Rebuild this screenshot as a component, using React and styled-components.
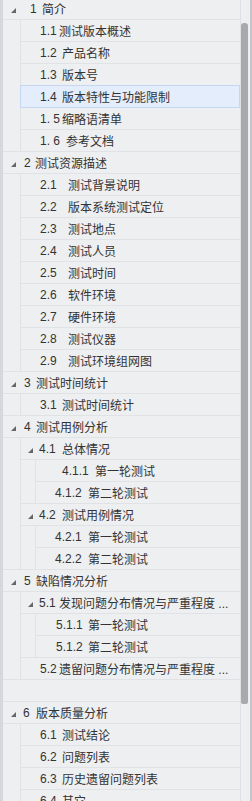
import React from 'react';
import styled, { createGlobalStyle, css } from 'styled-components';

const GlobalStyle = createGlobalStyle`
  html, body {
    margin: 0;
    padding: 0;
    background: #eeeff1;
    overflow: hidden;
  }
  body {
    font-family: "Liberation Sans", "Noto Sans CJK SC", sans-serif;
  }
`;

const Panel = styled.div`
  display: flex;
  width: 252px;
  height: 801px;
  background: #eeeff1;
  overflow: hidden;
`;

const LeftStrip = styled.div`
  flex: none;
  width: 3px;
  background: #d6d7dd;
`;

const TreeArea = styled.div`
  flex: 1;
  min-width: 0;
  overflow: hidden;
  border-right: 1px solid #dfe0e3;
`;

const TreeList = styled.div`
  margin-top: -2px;
`;

const Node = styled.div``;

const Header = styled.div`
  display: flex;
  align-items: center;
  height: 21px;
  padding-left: ${p => p.$tx}px;
  border-bottom: 1px solid #e1e2e5;
  font-size: 12px;
  color: #333;
  white-space: nowrap;
  overflow: hidden;

  ${p => p.$selected && css`
    margin: -1px 0 0 -1px;
    border: 1px solid #c7d7f2;
    background: #e4edfb;
  `}
`;

const Toggle = styled.span`
  flex: none;
  width: ${p => p.$w}px;
  display: flex;
  align-items: center;
  padding-top: 3px;
`;

const Num = styled.span`
  flex: none;
  width: ${p => p.$w}px;
`;

const Title = styled.span`
  flex: none;
`;

const Children = styled.div`
  border-bottom: 1px solid #e1e2e5;
`;

const ChildList = styled.div`
  margin-left: ${p => p.$indent}px;
  border-left: 1px solid #e1e2e5;

  & > ${Node}:last-child > *:last-child {
    border-bottom: none;
  }
`;

const ScrollTrack = styled.div`
  flex: none;
  width: 8px;
  padding: 23px 1px 0 0;
`;

const Thumb = styled.div`
  width: 7px;
  height: 681px;
  background: #a9a9ad;
  border-radius: 3px 3px 2px 2px;
`;

const RightEdge = styled.div`
  flex: none;
  width: 2px;
  background: #c3c4cc;
`;

const Arrow = () => (
  <svg width="5" height="5" viewBox="0 0 5 5">
    <polygon points="5,0 5,5 0,5" fill="#666" />
  </svg>
);

// tx: toggle offset, nx: number offset, gap: number-to-title distance
const LEVEL = [
  { tx: 8, nx: 21, indent: 17 },
  { tx: 7, nx: 19, indent: 14 },
  { tx: 7, nx: 19, indent: 14 },
];

const tree = [
  { num: '1', title: '简介', nx: 27, gap: 12, children: [
    { num: '1.1', title: '测试版本概述', gap: 19 },
    { num: '1.2', title: '产品名称', gap: 22 },
    { num: '1.3', title: '版本号', gap: 22 },
    { num: '1.4', title: '版本特性与功能限制', gap: 22, selected: true },
    { num: '1. 5', title: '缩略语清单', gap: 22 },
    { num: '1. 6', title: '参考文档', gap: 26 },
  ] },
  { num: '2', title: '测试资源描述', gap: 11, children: [
    { num: '2.1', title: '测试背景说明', gap: 28 },
    { num: '2.2', title: '版本系统测试定位', gap: 28 },
    { num: '2.3', title: '测试地点', gap: 28 },
    { num: '2.4', title: '测试人员', gap: 28 },
    { num: '2.5', title: '测试时间', gap: 28 },
    { num: '2.6', title: '软件环境', gap: 28 },
    { num: '2.7', title: '硬件环境', gap: 28 },
    { num: '2.8', title: '测试仪器', gap: 28 },
    { num: '2.9', title: '测试环境组网图', gap: 28 },
  ] },
  { num: '3', title: '测试时间统计', gap: 12, children: [
    { num: '3.1', title: '测试时间统计', gap: 22 },
  ] },
  { num: '4', title: '测试用例分析', gap: 12, children: [
    { num: '4.1', title: '总体情况', nx: 18, gap: 23, children: [
      { num: '4.1.1', title: '第一轮测试', nx: 26, gap: 33 },
      { num: '4.1.2', title: '第二轮测试', gap: 33 },
    ] },
    { num: '4.2', title: '测试用例情况', nx: 18, gap: 23, children: [
      { num: '4.2.1', title: '第一轮测试', gap: 33 },
      { num: '4.2.2', title: '第二轮测试', gap: 33 },
    ] },
  ] },
  { num: '5', title: '缺陷情况分析', gap: 12, children: [
    { num: '5.1', title: '发现问题分布情况与严重程度 ...', nx: 18, gap: 20, children: [
      { num: '5.1.1', title: '第一轮测试', nx: 20, gap: 32 },
      { num: '5.1.2', title: '第二轮测试', nx: 20, gap: 32 },
    ] },
    { num: '5.2', title: '遗留问题分布情况与严重程度 ...', gap: 19 },
  ] },
  { num: '', title: '', gap: 0 },
  { num: '6', title: '版本质量分析', nx: 20, gap: 13, children: [
    { num: '6.1', title: '测试结论', gap: 22 },
    { num: '6.2', title: '问题列表', gap: 22 },
    { num: '6.3', title: '历史遗留问题列表', gap: 22 },
    { num: '6.4', title: '其它', gap: 22 },
  ] },
];

const TreeNode = ({ item, level }) => {
  const cfg = LEVEL[level];
  const nx = item.nx ?? cfg.nx;
  const hasKids = !!item.children;
  return (
    <Node>
      <Header $tx={cfg.tx} $selected={item.selected}>
        <Toggle $w={nx - cfg.tx}>{hasKids && <Arrow />}</Toggle>
        <Num $w={item.gap}>{item.num}</Num>
        <Title>{item.title}</Title>
      </Header>
      {hasKids && (
        <Children>
          <ChildList $indent={cfg.indent}>
            {item.children.map((c, i) => (
              <TreeNode key={i} item={c} level={level + 1} />
            ))}
          </ChildList>
        </Children>
      )}
    </Node>
  );
};

export default function App() {
  return (
    <>
      <GlobalStyle />
      <Panel>
        <LeftStrip />
        <TreeArea>
          <TreeList>
            {tree.map((item, i) => (
              <TreeNode key={i} item={item} level={0} />
            ))}
          </TreeList>
        </TreeArea>
        <ScrollTrack>
          <Thumb />
        </ScrollTrack>
        <RightEdge />
      </Panel>
    </>
  );
}
